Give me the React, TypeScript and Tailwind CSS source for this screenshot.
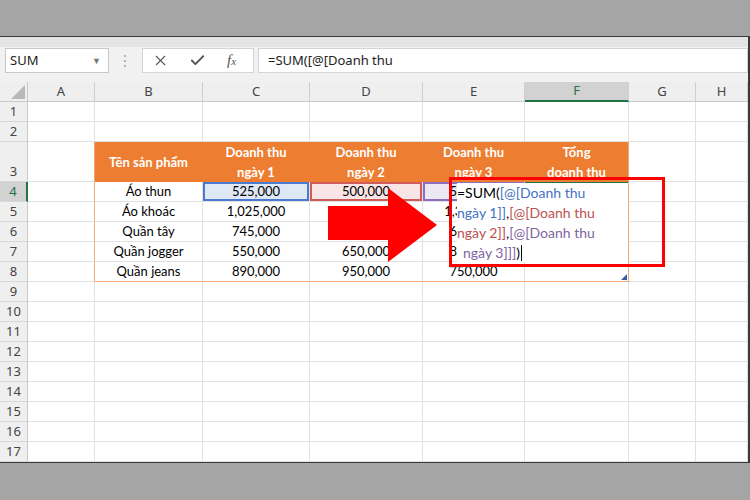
import { X, Check } from "lucide-react";

const COLS = ["A", "B", "C", "D", "E", "F", "G", "H"];
const ROWS = Array.from({ length: 17 }, (_, i) => i + 1);

const data: Record<number, string[]> = {
  4: ["Áo thun", "525,000", "500,000", "550,000", ""],
  5: ["Áo khoác", "1,025,000", "700,000", "1,350,000", ""],
  6: ["Quần tây", "745,000", "800,000", "650,000", ""],
  7: ["Quần jogger", "550,000", "650,000", "850,000", ""],
  8: ["Quần jeans", "890,000", "950,000", "750,000", ""],
};

const headers = ["Tên sản phẩm", "Doanh thu\nngày 1", "Doanh thu\nngày 2", "Doanh thu\nngày 3", "Tổng\ndoanh thu"];

const refStyle: Record<string, string> = {
  C4: "bg-[#dfe9f6] shadow-[inset_0_0_0_2px_#4b7bd0]",
  D4: "bg-[#f9e5e5] shadow-[inset_0_0_0_2px_#cf5b5b]",
  E4: "bg-[#ece8f4] shadow-[inset_0_0_0_2px_#8e6cc0]",
  F4: "shadow-[inset_0_2px_0_0_#217346]",
};

function cellBorders(r: number, ci: number) {
  const inTable = r >= 3 && r <= 8 && ci >= 1 && ci <= 5;
  let right = "border-r-[#e1e1e1]";
  let bottom = "border-b-[#e1e1e1]";
  if (r === 3 && inTable) {
    right = ci === 5 ? "border-r-[#f0a875]" : "border-r-[#ed7d31]";
    bottom = "border-b-[#ed7d31]";
  } else if (inTable) {
    if (ci === 5) right = "border-r-[#f0a875]";
    if (r === 8) bottom = "border-b-[#f0a875]";
  }
  if (ci === 0 && r >= 3 && r <= 8) right = "border-r-[#f0a875]";
  return `border-r border-b ${right} ${bottom}`;
}

function Cell({ r, ci }: { r: number; ci: number }) {
  const key = `${COLS[ci]}${r}`;
  const borders = cellBorders(r, ci);
  if (r === 3 && ci >= 1 && ci <= 5) {
    return (
      <div className={`${borders} bg-[#ed7d31] flex items-center justify-center pt-[1px] text-center text-white font-bold text-[13px] leading-[20px] whitespace-pre`}>
        {headers[ci - 1]}
      </div>
    );
  }
  const text = data[r] && ci >= 1 && ci <= 5 ? data[r][ci - 1] : "";
  return (
    <div
      className={`${borders} ${refStyle[key] ?? "bg-white"} relative flex items-end justify-center pb-[1px] text-[13px] leading-[17px] text-black whitespace-nowrap overflow-visible`}
    >
      {text}
      {key === "F8" && (
        <svg className="absolute right-[1px] bottom-[1px]" width="6" height="6" viewBox="0 0 6 6">
          <polygon points="6,0 6,6 0,6" fill="#3b5bab" />
        </svg>
      )}
    </div>
  );
}

export default function App() {
  return (
    <div className="relative w-[750px] h-[500px] bg-[#a5a5a5] pt-[36px] overflow-hidden">
      <div className="w-[750px] border-t border-b border-r-2 border-[#3a3a3a] bg-white">
        {/* formula bar */}
        <div className="h-[45px] bg-[#f1f1f1] flex flex-col font-['Noto_Sans',sans-serif] text-[13px] text-[#222]">
          <div className="h-[10px] bg-[#e4e4e4]" />
          <div className="h-[25px] mt-[1px] flex items-center">
            <div className="ml-[5px] w-[104px] h-[25px] bg-white border border-[#c8c8c8] flex items-center justify-between pl-[4px] pr-[7px]">
              <span>SUM</span>
              <span className="text-[9px] text-[#777]">▼</span>
            </div>
            <div className="ml-[15px] w-[3px] h-[12px] flex flex-col justify-between">
              <span className="w-[2px] h-[2px] bg-[#b4b4b4]" />
              <span className="w-[2px] h-[2px] bg-[#b4b4b4]" />
              <span className="w-[2px] h-[2px] bg-[#b4b4b4]" />
            </div>
            <div className="ml-[15px] w-[112px] h-[25px] bg-white border border-[#d4d4d4] flex items-center pl-[9px]">
              <X className="w-[17px] h-[17px] text-[#555]" strokeWidth={1.5} />
              <Check className="ml-[20px] w-[17px] h-[17px] text-[#555]" strokeWidth={2.6} />
              <span className="ml-[21px] font-['Liberation_Serif',serif] italic text-[15px] text-[#555]">
                f<span className="text-[11px]">x</span>
              </span>
            </div>
            <div className="ml-[4px] flex-1 h-[25px] bg-white border border-[#d4d4d4] flex items-center pl-[9px]">
              =SUM([@[Doanh thu
            </div>
          </div>
        </div>

        {/* sheet grid */}
        <div className="grid grid-cols-[28px_67px_108px_107px_113px_102px_104px_67px_52px] grid-rows-[20px_20px_20px_40px_repeat(14,20px)] font-['Lato',sans-serif]">
          <div className="bg-[#efefef] border-r border-b border-[#c9c9c9] relative">
            <svg className="absolute right-[2px] bottom-[2px]" width="14" height="14" viewBox="0 0 14 14">
              <polygon points="14,0 14,14 0,14" fill="#b9b9b9" />
            </svg>
          </div>
          {COLS.map((c) => (
            <div
              key={c}
              className={`flex items-center justify-center font-['Noto_Sans',sans-serif] text-[13px] border-r border-[#cfcfcf] ${
                c === "F"
                  ? "bg-[#d2d2d2] text-[#217346] border-b-2 border-b-[#217346]"
                  : "bg-[#efefef] text-[#444] border-b border-b-[#c9c9c9]"
              }`}
            >
              {c}
            </div>
          ))}
          {ROWS.map((r) => (
            <div key={r} className="contents">
              <div
                className={`flex items-end justify-center pb-[1px] font-['Noto_Sans',sans-serif] text-[13px] leading-[18px] border-b border-[#d8d8d8] ${
                  r === 4
                    ? "bg-[#d2d2d2] text-[#217346] border-r-2 border-r-[#217346]"
                    : "bg-[#efefef] text-[#444] border-r border-r-[#c9c9c9]"
                }`}
              >
                {r}
              </div>
              {COLS.map((c, ci) => (
                <Cell key={c} r={r} ci={ci} />
              ))}
            </div>
          ))}
        </div>
      </div>

      {/* in-cell formula editor */}
      <div className="absolute left-[457px] top-[183px] w-[171px] h-[79px] bg-white font-['Lato',sans-serif] text-[14px] leading-[20px] whitespace-nowrap">
        <div>
          <span className="text-black">=SUM(</span>
          <span className="text-[#4472c4]">[@[Doanh thu</span>
        </div>
        <div>
          <span className="text-[#4472c4]">ngày 1]]</span>
          <span className="text-black">,</span>
          <span className="text-[#c0504d]">[@[Doanh thu</span>
        </div>
        <div>
          <span className="text-[#c0504d]">ngày 2]]</span>
          <span className="text-black">,</span>
          <span className="text-[#8064a2]">[@[Doanh thu</span>
        </div>
        <div className="pl-[6px] flex items-center">
          <span className="text-[#8064a2]">ngày 3]]]</span>
          <span className="text-black">)</span>
          <span className="ml-[1px] w-[1px] h-[16px] bg-black" />
        </div>
      </div>

      {/* red arrow */}
      <svg className="absolute left-[328px] top-[188px]" width="110" height="75" viewBox="0 0 110 75">
        <polygon points="0,18 60,18 60,0 109,37 60,74 60,52 0,52" fill="#ff0000" />
      </svg>

      {/* red highlight box */}
      <div className="absolute left-[449px] top-[177px] w-[216px] h-[90px] border-[3px] border-[#ff0000]" />
    </div>
  );
}
